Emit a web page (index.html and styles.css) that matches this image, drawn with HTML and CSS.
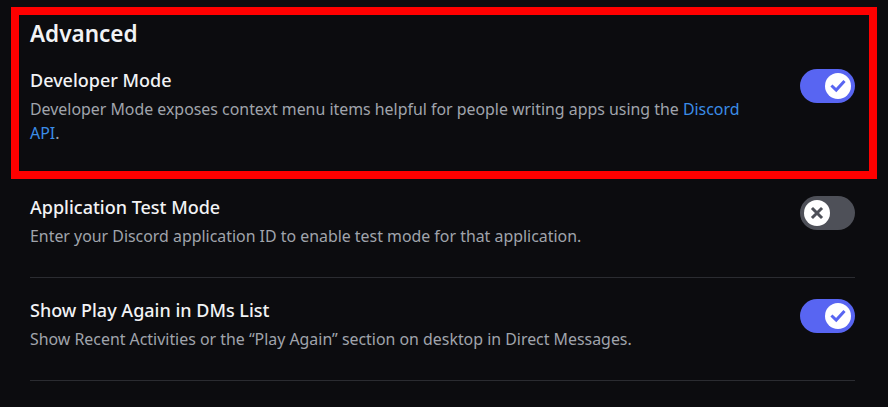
FILE: index.html
```html
<!DOCTYPE html>
<html lang="en">
<head>
<meta charset="utf-8">
<title>Advanced</title>
<link rel="stylesheet" href="styles.css">
</head>
<body>
<main class="settings">
  <h2 class="section-title">Advanced</h2>

  <div class="row">
    <div class="row-text">
      <div class="row-title">Developer Mode</div>
      <div class="row-desc">Developer Mode exposes context menu items helpful for people writing apps using the <a class="link" href="#">Discord API</a>.</div>
    </div>
    <div class="toggle on">
      <span class="knob">
        <svg viewBox="0 0 26 26" width="26" height="26"><polyline points="7.5,13.5 11.2,17 18.5,9" fill="none" stroke="#5865f2" stroke-width="3" stroke-linecap="square"/></svg>
      </span>
    </div>
  </div>

  <div class="row">
    <div class="row-text">
      <div class="row-title">Application Test Mode</div>
      <div class="row-desc">Enter your Discord application ID to enable test mode for that application.</div>
    </div>
    <div class="toggle off">
      <span class="knob">
        <svg viewBox="0 0 26 26" width="26" height="26"><path d="M9 9 L17 17 M17 9 L9 17" fill="none" stroke="#4e5058" stroke-width="3" stroke-linecap="square"/></svg>
      </span>
    </div>
  </div>

  <div class="row">
    <div class="row-text">
      <div class="row-title">Show Play Again in DMs List</div>
      <div class="row-desc">Show Recent Activities or the “Play Again” section on desktop in Direct Messages.</div>
    </div>
    <div class="toggle on">
      <span class="knob">
        <svg viewBox="0 0 26 26" width="26" height="26"><polyline points="7.5,13.5 11.2,17 18.5,9" fill="none" stroke="#5865f2" stroke-width="3" stroke-linecap="square"/></svg>
      </span>
    </div>
  </div>

  <div class="highlight"></div>
</main>
</body>
</html>
```

FILE: styles.css
```css
* { box-sizing: border-box; }
html, body {
  margin: 0;
  padding: 0;
  background: #0c0c0f;
  height: 100%;
  overflow: hidden;
}
body {
  font-family: "Noto Sans", "Open Sans", sans-serif;
  color: #f2f3f5;
}
.settings {
  position: relative;
  padding: 20px 33px 0 30px;
}
.section-title {
  margin: 0 0 20px;
  font-size: 22.5px;
  line-height: 28px;
  font-weight: 600;
  color: #f2f3f5;
}
.row {
  display: flex;
  align-items: flex-start;
  justify-content: space-between;
  padding-bottom: 29px;
  margin-bottom: 20px;
  border-bottom: 1px solid #2b2c31;
}
.row-text {
  flex: 1;
  padding-right: 46px;
}
.row-title {
  font-size: 18px;
  line-height: 24px;
  font-weight: 500;
  color: #f2f3f5;
}
.row-desc {
  margin-top: 5px;
  font-size: 15.9px;
  line-height: 24px;
  color: #a0a4ac;
}
.link {
  color: #3b8de8;
  text-decoration: none;
}
.toggle {
  flex: none;
  width: 55px;
  height: 34px;
  margin-top: 1px;
  border-radius: 17px;
  padding: 4px;
  display: flex;
}
.toggle.on { background: #5865f2; justify-content: flex-end; }
.toggle.off { background: #4e5058; justify-content: flex-start; }
.knob {
  width: 26px;
  height: 26px;
  border-radius: 50%;
  background: #ffffff;
  display: block;
}
.knob svg { display: block; }
.highlight {
  position: absolute;
  left: 11px;
  top: 7px;
  width: 866px;
  height: 172px;
  border: 8px solid #ff0000;
  pointer-events: none;
}
```
